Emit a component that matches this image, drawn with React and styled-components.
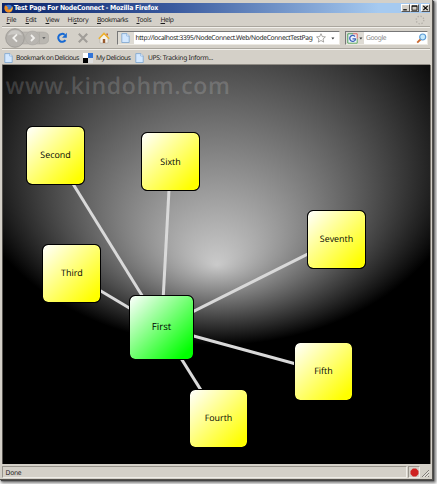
import React from "react";
import styled, { createGlobalStyle } from "styled-components";

const GlobalStyle = createGlobalStyle`
  html, body { margin: 0; background: #fff; overflow: hidden; }
  * { box-sizing: border-box; }
`;

const Desktop = styled.div`
  width: 437px;
  height: 484px;
  overflow: hidden;
  background: #fff;
  text-rendering: geometricPrecision;
`;

const BrowserWindow = styled.div`
  width: 433px;
  height: 480px;
  display: flex;
  flex-direction: column;
  padding: 3px 2px 0 2px;
  background: #d4d0c8;
  border-right: 1px solid #55524e;
  border-bottom: 1px solid #55524e;
  box-shadow: 1px 1px 1px #444, 2px 2px 3px 1px rgba(0, 0, 0, 0.55);
  font-family: "Noto Sans", "Open Sans", sans-serif;
  font-size: 6.7px;
  color: #1c1c1c;
`;

const TitleBar = styled.header`
  height: 10px;
  display: flex;
  align-items: center;
  flex: none;
  padding: 0 0 0 2px;
  background: linear-gradient(90deg, #0a246a, #3a5a9e 40%, #a6caf0 88%);
`;

const Title = styled.h1`
  flex: 1;
  margin: 0 0 0 1px;
  font: bold 6.9px/10px "DejaVu Sans Condensed", "DejaVu Sans", sans-serif;
  letter-spacing: ${(p) => p.$tracking};
  white-space: nowrap;
  color: #fff;
`;

const WindowButton = styled.button`
  width: 9px;
  height: 8px;
  padding: 0;
  margin-left: ${(p) => (p.$gap ? "2px" : "0.5px")};
  border: 1px solid;
  border-color: #fff #555 #555 #fff;
  background: #d4d0c8;
  display: grid;
  place-items: center;
`;

const MenuBar = styled.nav`
  height: 14px;
  flex: none;
  display: flex;
  align-items: center;
  padding: 1px 5px 0 4.5px;
  border-bottom: 1px solid #aaa69e;
`;

const MenuItem = styled.span`
  width: ${(p) => p.$w}px;
  flex: none;
  line-height: 12px;
  letter-spacing: ${(p) => p.$tracking || "-0.25px"};
  white-space: nowrap;
  u { text-decoration-thickness: 0.6px; text-underline-offset: 1px; }
`;

const Spacer = styled.div`
  flex: 1;
`;

const NavBar = styled.div`
  height: 22px;
  flex: none;
  display: flex;
  align-items: center;
  padding: 0 4px 0 1px;
  border-top: 1px solid #f2f0eb;
  border-bottom: 1px solid #aaa69e;
`;

const HistoryButtons = styled.svg`
  width: 46px;
  height: 20px;
  flex: none;
`;

const NavIcon = styled.svg`
  width: ${(p) => p.$w || 12}px;
  height: ${(p) => p.$h || 12}px;
  margin-left: ${(p) => p.$ml || 0}px;
  flex: none;
  display: block;
`;

const Field = styled.div`
  height: 14px;
  width: ${(p) => p.$w}px;
  margin-left: ${(p) => p.$ml}px;
  flex: none;
  display: flex;
  align-items: center;
  overflow: hidden;
  background: #fff;
  border: 1px solid;
  border-color: #777 #ece9e2 #ece9e2 #777;
`;

const FieldIcon = styled.div`
  width: ${(p) => p.$w}px;
  height: 12px;
  flex: none;
  display: flex;
  align-items: center;
  justify-content: center;
  background: #dedbd4;
`;

const Address = styled.span`
  width: 180px;
  flex: none;
  margin-left: 2px;
  white-space: nowrap;
  line-height: 12px;
  letter-spacing: -0.34px;
`;

const Hint = styled.span`
  flex: 1;
  padding-left: 2px;
  line-height: 12px;
  letter-spacing: -0.4px;
  color: #888;
`;

const BookmarkBar = styled.div`
  height: 16px;
  flex: none;
  display: flex;
  align-items: center;
  padding: 1px 0 0 2px;
  border-top: 1px solid #f2f0eb;
  border-bottom: 1px solid #8f8b84;
`;

const Bookmark = styled.span`
  display: flex;
  align-items: center;
  width: ${(p) => p.$w}px;
  flex: none;
  gap: ${(p) => p.$gap || 3}px;
  line-height: 12px;
  letter-spacing: ${(p) => p.$tracking};
  white-space: nowrap;
`;

const Page = styled.main`
  position: relative;
  height: 399px;
  flex: none;
  border-left: 1px solid #55524e;
  border-right: 1px solid #77736c;
  margin-right: -0.5px;
  overflow: hidden;
  background: #000;
`;

const Backdrop = styled.svg`
  position: absolute;
  inset: 0;
  width: 428px;
  height: 399px;
`;

const Watermark = styled.div`
  position: relative;
  padding: 5px 0 0 2.5px;
  font: 600 23px/30px "Open Sans", "Noto Sans", sans-serif;
  letter-spacing: 0.65px;
  color: rgba(255, 255, 255, 0.16);
`;

const Node = styled.div`
  position: absolute;
  left: ${(p) => p.$x}px;
  top: ${(p) => p.$y}px;
  width: ${(p) => p.$size}px;
  height: ${(p) => p.$size}px;
  display: grid;
  place-items: center;
  border: 1.5px solid #000;
  border-radius: 6px;
  background: linear-gradient(135deg, #fff, ${(p) => p.$color} 90%) padding-box, #000;
  font: ${(p) => p.$font}px/14px "Open Sans", "Noto Sans", sans-serif;
  font-weight: 500;
  padding-bottom: 0.5px;
  color: #000;
`;

const StatusBar = styled.footer`
  height: 14px;
  flex: none;
  display: flex;
  align-items: center;
  margin-top: 1px;
`;

const StatusPane = styled.div`
  height: 12px;
  width: ${(p) => (p.$w ? `${p.$w}px` : "auto")};
  flex: ${(p) => (p.$w ? "none" : 1)};
  display: flex;
  align-items: center;
  padding-left: ${(p) => (p.$w ? 1 : 2.5)}px;
  margin-right: 1px;
  letter-spacing: -0.25px;
  border: 1px solid;
  border-color: #98948c #efede8 #efede8 #98948c;
`;

const DocIcon = () => (
  <NavIcon viewBox="0 0 9 10" $w={9} $h={10}>
    <path d="M.8.6h5L8.2 3v6.5H.8z" fill="#d3e8ff" stroke="#6f9ccc" strokeWidth=".7" />
    <path d="M5.7.7V3h2.4" fill="#fff" stroke="#6f9ccc" strokeWidth=".6" />
  </NavIcon>
);

const DownArrow = ({ ml }) => (
  <NavIcon viewBox="0 0 4 3" $w={4} $h={3} $ml={ml}>
    <path d="M.4.5h3L1.9 2.4z" fill="#333" />
  </NavIcon>
);

const NODES = [
  { name: "Second", x: 23, y: 61 },
  { name: "Sixth", x: 138, y: 67.3 },
  { name: "Third", x: 39.4, y: 179.2 },
  { name: "Seventh", x: 304, y: 145.2 },
  { name: "Fifth", x: 291, y: 277 },
  { name: "Fourth", x: 186, y: 323.6 },
];
const NODE_SIZE = 59;
const HUB = { x: 126.3, y: 230, size: 64.6 };
const HUB_CENTER = { x: HUB.x + HUB.size / 2, y: HUB.y + HUB.size / 2 };

function NodeMap() {
  return (
    <Page>
      <Backdrop viewBox="0 0 428 399">
        <defs>
          <radialGradient
            id="glow"
            gradientUnits="userSpaceOnUse"
            cx="0" cy="0" r="1" fx="0" fy="0.6"
            gradientTransform="translate(214 80) scale(257 200)"
          >
            <stop offset="0" stopColor="#cacaca" />
            <stop offset="1" stopColor="#000" />
          </radialGradient>
        </defs>
        <rect width="428" height="399" fill="url(#glow)" />
        {NODES.map((n) => (
          <line
            key={n.name}
            x1={HUB_CENTER.x} y1={HUB_CENTER.y}
            x2={n.x + NODE_SIZE / 2} y2={n.y + NODE_SIZE / 2}
            stroke="#d9d9d9" strokeWidth="3"
          />
        ))}
      </Backdrop>
      <Watermark>www.kindohm.com</Watermark>
      {NODES.map((n) => (
        <Node key={n.name} $x={n.x} $y={n.y} $size={NODE_SIZE} $font={8.9} $color="#ff0">
          {n.name}
        </Node>
      ))}
      <Node $x={HUB.x} $y={HUB.y} $size={HUB.size} $font={9.7} $color="#0f0">First</Node>
    </Page>
  );
}

export default function App() {
  return (
    <Desktop>
      <GlobalStyle />
      <BrowserWindow>
        <TitleBar>
          <NavIcon viewBox="0 0 9 9" $w={9} $h={9}>
            <circle cx="4.6" cy="4.5" r="3.8" fill="#3a76cf" />
            <path d="M1 1.2C.2 3 .1 5.6 1.6 7.3 3.5 9.3 7 9 8.2 6.5c.7-1.5.7-3-.1-4.4-.1 1.5-.7 2.9-2 3.3-1.3.5-2.5 0-2.9-.8l1.4-.7C3.6 3.4 2.6 2.9 2.7 2z" fill="#ef8a1d" />
            <path d="M8 2.3c.3 2.3-1 4.4-3.4 4.8 2 .5 3.9-1.2 3.9-3z" fill="#fbd34a" />
          </NavIcon>
          <Title $tracking="-0.23px">Test Page For NodeConnect - Mozilla Firefox</Title>
          <WindowButton aria-label="Minimize">
            <NavIcon viewBox="0 0 7 6" $w={7} $h={6}><path d="M1.2 4.8h3.6" stroke="#000" strokeWidth="1.2" /></NavIcon>
          </WindowButton>
          <WindowButton aria-label="Maximize">
            <NavIcon viewBox="0 0 7 6" $w={7} $h={6}><path d="M1 .8h5v4.4H1zM1 1.3h5" fill="none" stroke="#000" strokeWidth=".8" /></NavIcon>
          </WindowButton>
          <WindowButton $gap aria-label="Close">
            <NavIcon viewBox="0 0 7 6" $w={7} $h={6}><path d="M1.3.8l4.4 4.4M5.7.8L1.3 5.2" stroke="#000" strokeWidth="1.1" /></NavIcon>
          </WindowButton>
        </TitleBar>
        <MenuBar>
          <MenuItem $w={19}><u>F</u>ile</MenuItem>
          <MenuItem $w={20}><u>E</u>dit</MenuItem>
          <MenuItem $w={22}><u>V</u>iew</MenuItem>
          <MenuItem $w={29.5}>Hi<u>s</u>tory</MenuItem>
          <MenuItem $w={39.5} $tracking="-0.5px"><u>B</u>ookmarks</MenuItem>
          <MenuItem $w={24}><u>T</u>ools</MenuItem>
          <MenuItem $w={16} $tracking="-0.4px"><u>H</u>elp</MenuItem>
          <Spacer />
          <NavIcon viewBox="0 0 10 10" $w={10} $h={10}>
            <circle cx="5" cy="5" r="3.8" fill="none" stroke="#b4b0a9" strokeWidth="1.3" strokeDasharray="1.4 1.58" />
          </NavIcon>
        </MenuBar>
        <NavBar>
          <HistoryButtons viewBox="0 0 46 20">
            <path d="M11 4h29q6 0 6 6t-6 6H11z" fill="#bab7b1" stroke="#a5a29c" strokeWidth=".5" />
            <path d="M36.5 4.2v11.6" stroke="#aaa7a1" strokeWidth=".6" />
            <circle cx="29.5" cy="10" r="7" fill="#b8b5b0" stroke="#a9a6a0" strokeWidth=".5" />
            <circle cx="12" cy="10" r="9.3" fill="#b5b2ad" stroke="#989590" strokeWidth=".8" />
            <path d="M4.8 7.5a7.6 7.6 0 0 1 14.4 0q-7-2.5-14.4 0" fill="#cbc9c5" />
            <path d="M14 6.3L10.3 10l3.7 3.7M28 7l3 3-3 3" fill="none" stroke="#f2f1ee" strokeWidth="1.8" />
            <path d="M39.2 9h3.4l-1.7 2.2z" fill="#666" />
          </HistoryButtons>
          <NavIcon viewBox="0 0 12 12" $w={12} $h={12} $ml={6.5}>
            <path d="M8.7 2.7A4 4 0 1 0 9.5 8.2" fill="none" stroke="#1769d2" strokeWidth="2" />
            <path d="M10.8.8v5H6z" fill="#1769d2" />
          </NavIcon>
          <NavIcon viewBox="0 0 12 12" $w={12} $h={12} $ml={9}>
            <path d="M1.8 1.8l8.4 8.4M10.2 1.8L1.8 10.2" stroke="#a09d98" strokeWidth="2.1" />
          </NavIcon>
          <NavIcon viewBox="0 0 12 12" $w={12} $h={12} $ml={9.5}>
            <path d="M2 6L6 2l4 4v5H2z" fill="#f3f1ea" stroke="#a7a39a" strokeWidth=".5" />
            <path d="M.8 6.7L6 1.4l5.2 5.3" fill="none" stroke="#eeb02c" strokeWidth="1.5" />
            <path d="M4.8 7h2.4v4H4.8z" fill="#98592d" />
            <path d="M8.4 1.5h1.4v2.3L8.4 2.5z" fill="#c2571e" />
          </NavIcon>
          <Field $w={223} $ml={6.5}>
            <FieldIcon $w={16}><DocIcon /></FieldIcon>
            <Address>http://localhost:3395/NodeConnect.Web/NodeConnectTestPag</Address>
            <NavIcon viewBox="0 0 10 10" $w={10} $h={10} $ml={0.5}>
              <path d="M5 .7l1.3 2.9 3.1.3L7 6l.7 3.1L5 7.5 2.3 9.1 3 6 .6 3.9l3.1-.3z" fill="#fff" stroke="#85827e" strokeWidth=".7" />
            </NavIcon>
            <DownArrow ml={5} />
          </Field>
          <Field $w={83} $ml={5}>
            <FieldIcon $w={18.5}>
              <NavIcon viewBox="0 0 11 11" $w={11} $h={11}>
                <path d="M.5.5h10v10H.5z" fill="#edf3ff" />
                <path d="M.8 10V.8H6" fill="none" stroke="#4a9c54" strokeWidth="1" />
                <path d="M6 .8h4.2v5" fill="none" stroke="#d86057" strokeWidth="1" />
                <path d="M10.2 5.8v4.4H.8" fill="none" stroke="#65aa5f" strokeWidth="1" />
                <path d="M8.1 3.5A3 3 0 1 0 8.3 7V5.8H5.5" fill="none" stroke="#3a60b8" strokeWidth="1.3" />
              </NavIcon>
              <DownArrow ml={1} />
            </FieldIcon>
            <Hint>Google</Hint>
            <NavIcon viewBox="0 0 11 11" $w={11} $h={11}>
              <path d="M1.2 9.6L5 6" stroke="#c9672d" strokeWidth="1.9" />
              <circle cx="6.7" cy="4" r="3" fill="#c8eafc" stroke="#5b9bd4" strokeWidth="1.2" />
            </NavIcon>
          </Field>
        </NavBar>
        <BookmarkBar>
          <Bookmark $w={79} $tracking="-0.45px"><DocIcon />Bookmark on Delicious</Bookmark>
          <Bookmark $w={52} $tracking="-0.42px">
            <NavIcon viewBox="0 0 10 10" $w={10} $h={10}>
              <path d="M0 0h5v5H0z" fill="#fff" /><path d="M5 0h5v5H5z" fill="#3274d8" />
              <path d="M0 5h5v5H0z" fill="#000" /><path d="M5 5h5v5H5z" fill="#ddd" />
            </NavIcon>
            My Delicious
          </Bookmark>
          <Bookmark $w={85} $gap={4} $tracking="-0.28px"><DocIcon />UPS: Tracking Inform...</Bookmark>
        </BookmarkBar>
        <NodeMap />
        <StatusBar>
          <StatusPane>Done</StatusPane>
          <StatusPane $w={12}>
            <NavIcon viewBox="0 0 9 9" $w={9} $h={9}>
              <path d="M2.9.5h3.2l2.4 2.4v3.2L6.1 8.5H2.9L.5 6.1V2.9z" fill="#cf2222" />
            </NavIcon>
          </StatusPane>
          <NavIcon viewBox="0 0 9 12" $w={9} $h={12}>
            <path d="M1 11l7-7M4 11l4-4M7 11l1-1" stroke="#77736d" strokeWidth=".9" />
            <path d="M2 11.3l6.5-6.5M5 11.3l3.5-3.5" stroke="#fff" strokeWidth=".5" />
          </NavIcon>
        </StatusBar>
      </BrowserWindow>
    </Desktop>
  );
}
